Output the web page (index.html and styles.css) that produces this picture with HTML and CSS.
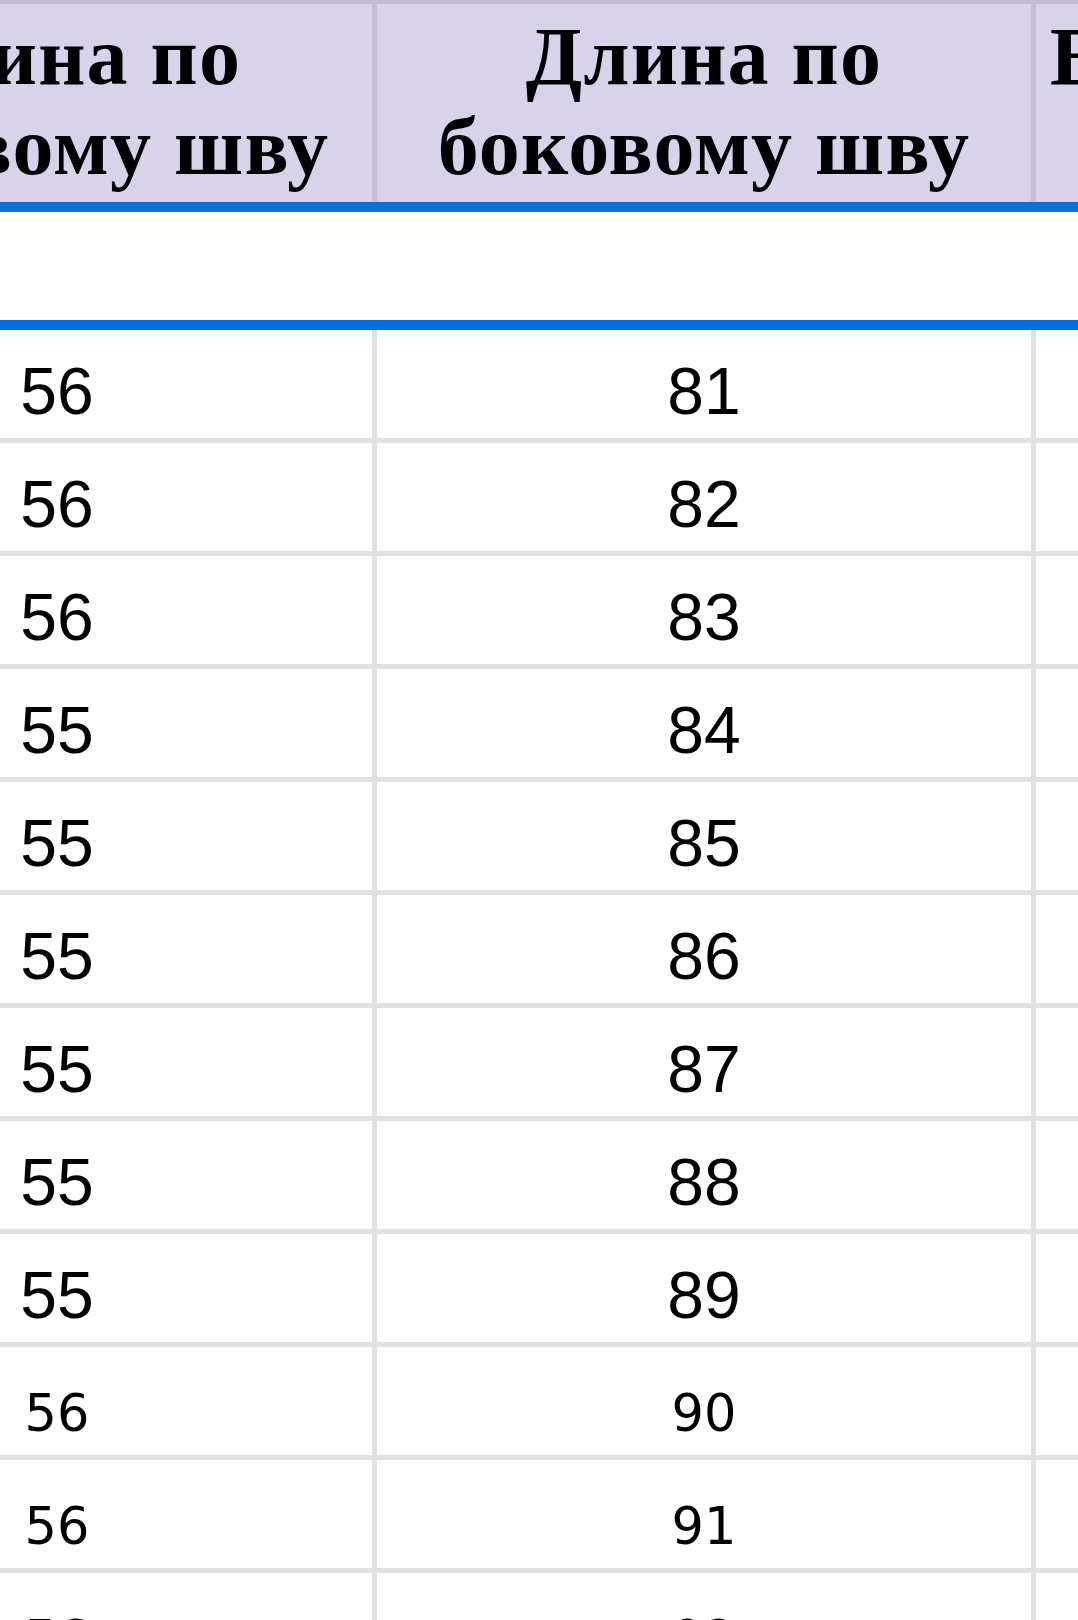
FILE: index.html
```html
<!DOCTYPE html>
<html lang="ru">
<head>
<meta charset="utf-8">
<title>Таблица размеров</title>
<link rel="stylesheet" href="styles.css">
</head>
<body>
<div class="sheet">
  <div class="head">
    <div class="hcell hcell-first">Длина по<br>боковому шву</div>
    <div class="hcell">Длина по<br>боковому шву</div>
    <div class="hcell hcell-left">Высота посадки</div>
  </div>
  <div class="band"></div>
  <div class="row"><div class="cell">56</div><div class="cell">81</div><div class="cell"></div></div>
  <div class="row"><div class="cell">56</div><div class="cell">82</div><div class="cell"></div></div>
  <div class="row"><div class="cell">56</div><div class="cell">83</div><div class="cell"></div></div>
  <div class="row"><div class="cell">55</div><div class="cell">84</div><div class="cell"></div></div>
  <div class="row"><div class="cell">55</div><div class="cell">85</div><div class="cell"></div></div>
  <div class="row"><div class="cell">55</div><div class="cell">86</div><div class="cell"></div></div>
  <div class="row"><div class="cell">55</div><div class="cell">87</div><div class="cell"></div></div>
  <div class="row"><div class="cell">55</div><div class="cell">88</div><div class="cell"></div></div>
  <div class="row"><div class="cell">55</div><div class="cell">89</div><div class="cell"></div></div>
  <div class="row row-alt"><div class="cell">56</div><div class="cell">90</div><div class="cell"></div></div>
  <div class="row row-alt"><div class="cell">56</div><div class="cell">91</div><div class="cell"></div></div>
  <div class="row row-alt"><div class="cell">56</div><div class="cell">92</div><div class="cell"></div></div>
</div>
</body>
</html>
```

FILE: styles.css
```css
html, body {
  margin: 0;
  padding: 0;
  background: #ffffff;
  overflow: hidden;
}

body {
  width: 1078px;
  height: 1620px;
}

.sheet {
  width: 1953px;
  margin-left: -258px;
}

.head {
  display: grid;
  grid-template-columns: 635px 659px 659px;
  border-top: 4px solid #c1bcd3;
  background: #d8d3ea;
}

.hcell {
  height: 198px;
  box-sizing: border-box;
  padding-top: 8px;
  border-right: 5px solid #c5c0d8;
  font-family: "Liberation Serif", "Times New Roman", serif;
  font-weight: bold;
  font-size: 82px;
  letter-spacing: 1.2px;
  line-height: 90px;
  color: #000;
  text-align: center;
  white-space: nowrap;
  overflow: hidden;
}

.hcell-first {
  padding-left: 12px;
}

.hcell-left {
  text-align: left;
  padding-left: 14px;
}

.band {
  height: 108px;
  border-top: 10px solid #0070e0;
  border-bottom: 10px solid #0070e0;
  background: #fff;
}

.row {
  display: grid;
  grid-template-columns: 635px 659px 659px;
  border-bottom: 5px solid #e1e1e1;
}

.cell {
  height: 108px;
  box-sizing: border-box;
  border-right: 5px solid #e1e1e1;
  display: flex;
  align-items: flex-end;
  justify-content: center;
  padding-bottom: 14px;
  font-family: "Liberation Sans", Arial, sans-serif;
  font-size: 66px;
  line-height: 1;
  color: #000;
}

.row-alt .cell {
  font-family: "DejaVu Sans", Verdana, sans-serif;
  font-size: 51px;
  padding-bottom: 16px;
}
```
